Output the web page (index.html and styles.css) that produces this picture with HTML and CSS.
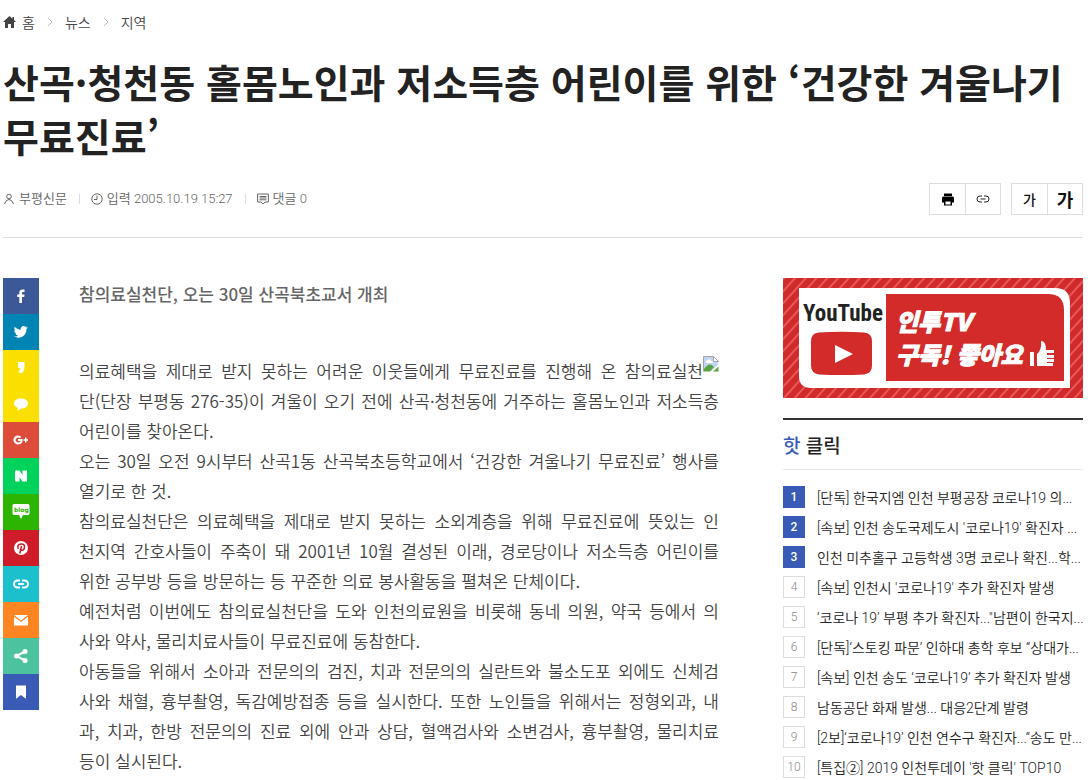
FILE: index.html
```html
<!DOCTYPE html>
<html lang="ko">
<head>
    <meta charset="UTF-8">
    <meta name="viewport" content="width=device-width, initial-scale=1">
    <title>인천투데이</title>
    <link rel="stylesheet" href="styles.css">
</head>
<body>

    <header class="article-head">
        <nav class="breadcrumb">
            <a href="#"><svg width="13" height="12" viewBox="0 0 13 12"><path d="M6.500 0L0 6h2v6h3V8h3v4h3V6h2L11 4V1H9.500v1.700z"/></svg>홈</a>
            <svg class="arrow" width="6" height="8" viewBox="0 0 6 8"><path d="M1 0l4 4-4 4"/></svg>
            <a href="#">뉴스</a>
            <svg class="arrow" width="6" height="8" viewBox="0 0 6 8"><path d="M1 0l4 4-4 4"/></svg>
            <a href="#">지역</a>
        </nav>
        <h1>산곡·청천동 홀몸노인과 저소득층 어린이를 위한 ‘건강한 겨울나기 무료진료’</h1>
        <div class="info">
            <ul class="meta">
                <li><svg width="12" height="12" viewBox="0 0 12 12"><circle cx="6" cy="3.500" r="2.300"/><path d="M1.500 11l2-3.500Q6 5.500 8.500 7.500l2 3.500"/></svg>부평신문</li>
                <li><svg width="12" height="12" viewBox="0 0 12 12"><circle cx="6" cy="6" r="5.200"/><path d="M6 2.500V6.500H3"/></svg>입력 2005.10.19 15:27</li>
                <li><svg width="12" height="12" viewBox="0 0 12 12"><path d="M.6 1h10.800v8H8L6 11 4 9H.6zM2.500 3.500h7M2.500 5h7M2.500 6.800h7"/></svg>댓글 0</li>
            </ul>
            <div class="tools">
                <div class="tool-group">
                    <button type="button" aria-label="프린트"><svg width="14" height="14" viewBox="0 0 14 14"><path d="M3 1.500h8V4H3z"/><path d="M2.500 4.500h9q1.500 0 1.500 1.500v4.500h-2V9H3v1.500H1V6q0-1.500 1.500-1.500z"/><path d="M3 8.500h8v5H3zM4.500 9.500v3h5v-3z" fill-rule="evenodd"/></svg></button>
                    <button type="button" aria-label="기사링크"><svg class="line" width="14" height="14" viewBox="0 0 14 14"><path d="M6 4H4a3 3 0 0 0 0 6h2M8 4h2a3 3 0 0 1 0 6H8M4.500 7h5"/></svg></button>
                </div>
                <div class="tool-group">
                    <button type="button" class="small">가</button>
                    <button type="button" class="big">가</button>
                </div>
            </div>
        </div>
    </header>

    <div class="wrap">
        <div class="share">
            <a href="#" class="facebook" aria-label="페이스북"><svg viewBox="0 0 16 16"><path d="M6.300 15V9H4.200V6.400h2.100V4.500Q6.300 1.500 9.500 1.500h2v2.400H10Q9 3.900 9 4.900v1.500h2.500L11.200 9H9v6z"/></svg></a>
            <a href="#" class="twitter" aria-label="트위터"><svg viewBox="0 0 16 16"><path d="M15 3.500l-1.500 1.600C13.600 10 10 13.800 5.300 13.800c-1.700 0-3.200-.4-4.300-1.200 1.600.1 3-.3 4.100-1.200-1.300 0-2.300-.8-2.700-2h1.200C2.200 9 1.200 7.900 1.200 6.400l1.300.3C1.300 5.700 1 4.100 1.700 2.800 3.200 4.600 5.300 5.600 7.700 5.700 7.300 3.800 8.600 2 10.500 2c.9 0 1.600.3 2.100.9l1.800-.6-1.200 1.500z"/></svg></a>
            <a href="#" class="story" aria-label="카카오스토리"><svg viewBox="0 0 16 16"><path d="M5 2h6.500v5q0 5-4 6.500L5.500 11.500Q7.500 10.500 7.500 8H5z"/></svg></a>
            <a href="#" class="talk" aria-label="카카오톡"><svg viewBox="0 0 16 16"><path d="M8 2.500c4 0 7 2 7 5s-3 5-7 5L4.500 15l.3-3.200C2.500 11 1 9.500 1 7.500c0-3 3-5 7-5z"/></svg></a>
            <a href="#" class="google" aria-label="구글플러스"><svg viewBox="0 0 16 16"><path d="M8.300 5L6.900 6.300a2.400 2.400 0 1 0 .5 2.700H5V7h4.700q.3 5.500-4.600 5.500A4.500 4.500 0 1 1 8.300 5zM12 5.500h1.500v1.700H15v1.500h-1.500v1.700H12V8.700h-1.500V7.200H12z"/></svg></a>
            <a href="#" class="naver" aria-label="네이버"><svg viewBox="0 0 16 16"><path d="M2 2.500h4.500l3 4.500V2.500H14v11H9.500l-3-4.500v4.500H2z"/></svg></a>
            <a href="#" class="blog" aria-label="네이버 블로그"><svg viewBox="0 0 18 16"><path d="M2 0h14q1.500 0 1.500 1.500v8Q17.500 11 16 11h-5l-2 4-2-4H2Q.5 11 .5 9.500v-8Q.5 0 2 0z"/><text x="2" y="8">blog</text></svg></a>
            <a href="#" class="pinterest" aria-label="핀터레스트"><svg viewBox="0 0 16 16"><circle cx="8" cy="8" r="7"/><path class="cut" d="M5.300 9Q3.500 4 8.300 4q3.700 0 3.200 3.500-.8 3.500-3.200 2.500-1-.5-1-1M8.500 6l-1.700 7.500"/></svg></a>
            <a href="#" class="link" aria-label="링크"><svg viewBox="0 0 16 16"><path class="stroke" d="M7 4.500H4.500a3.500 3.500 0 0 0 0 7H7M9 4.500h2.500a3.500 3.500 0 0 1 0 7H9M5 8h6"/></svg></a>
            <a href="#" class="mail" aria-label="이메일"><svg viewBox="0 0 16 16"><path d="M1 3h14L8 8.500zM1 4.700l7 5.300 7-5.300V13.500H1z"/></svg></a>
            <a href="#" class="more" aria-label="공유"><svg viewBox="0 0 16 16"><circle cx="3.500" cy="8" r="2.500"/><circle cx="12" cy="3.500" r="2.500"/><circle cx="12" cy="12.500" r="2.500"/><path class="stroke" d="M12 3.500L3.500 8l8.500 4.500"/></svg></a>
            <a href="#" class="bookmark" aria-label="북마크"><svg viewBox="0 0 16 16"><path d="M3 1.500h10v13.200L8 11l-5 3.700z"/></svg></a>
        </div>

        <article class="article">
            <h2>참의료실천단, 오는 30일 산곡북초교서 개최</h2>
            <div class="text">
                <svg class="photo" width="16" height="16" viewBox="0 0 16 16">
                    <path fill="#fff" stroke="#a5a5a5" d="M.5 15.500V.5h10l5 5"/>
                    <path fill="#c2d5f5" d="M1 1h9v5h5v3L8 15H1z"/>
                    <path fill="#fff" d="M3 6q0-2 2-2 2-2 3 1 2 0 2 2H3z"/>
                    <path fill="#58a542" d="M1 13q4-6 8-4l2 2-4 4.500H1zM10 15.500l5.500-5v5z"/>
                    <path fill="#fff" stroke="#a5a5a5" d="M10.500.5v5h5z"/>
                </svg>
                <p>의료혜택을 제대로 받지 못하는 어려운 이웃들에게 무료진료를 진행해 온 참의료실천<br>단(단장 부평동 276-35)이 겨울이 오기 전에 산곡·청천동에 거주하는 홀몸노인과 저소득층 <span>어린이를 찾아온다.</span></p>
                <p>오는 30일 오전 9시부터 산곡1동 산곡북초등학교에서 ‘건강한 겨울나기 무료진료’ 행사를 <span>열기로 한 것.</span></p>
                <p>참의료실천단은 의료혜택을 제대로 받지 못하는 소외계층을 위해 무료진료에 뜻있는 인<br>천지역 간호사들이 주축이 돼 2001년 10월 결성된 이래, 경로당이나 저소득층 어린이를 <span>위한 공부방 등을 방문하는 등 꾸준한 의료 봉사활동을 펼쳐온 단체이다.</span></p>
                <p>예전처럼 이번에도 참의료실천단을 도와 인천의료원을 비롯해 동네 의원, 약국 등에서 의<span>사와 약사, 물리치료사들이 무료진료에 동참한다.</span></p>
                <p>아동들을 위해서 소아과 전문의의 검진, 치과 전문의의 실란트와 불소도포 외에도 신체검<br>사와 채혈, 흉부촬영, 독감예방접종 등을 실시한다. 또한 노인들을 위해서는 정형외과, 내<br>과, 치과, 한방 전문의의 진료 외에 안과 상담, 혈액검사와 소변검사, 흉부촬영, 물리치료 <span>등이 실시된다.</span></p>
            </div>
        </article>

        <aside class="side">
            <a href="#" class="banner">
                <svg viewBox="0 0 300 120">
                    <defs>
                        <pattern id="stripes" width="8" height="8" patternUnits="userSpaceOnUse" patternTransform="rotate(42)">
                            <rect width="8" height="8" fill="#d12a2b"/>
                            <rect width="2" height="8" fill="#e8585a"/>
                        </pattern>
                    </defs>
                    <rect width="300" height="120" fill="url(#stripes)"/>
                    <path fill="#fff" d="M16 10h256q15 0 15 15v85H28q-12 0-12-12z"/>
                    <path fill="#d32a2a" d="M103 16h162q16 0 16 16v71H103z"/>
                    <text class="tube" x="20" y="43">YouTube</text>
                    <path fill="#d32a2a" d="M36 54.500q23-1.500 45 0 8 .5 8 9v24q0 8-8 9-22 1-45 0-8-1-8-9v-24q0-8.500 8-9z"/>
                    <path fill="#fff" d="M52 67l18 9-18 9z"/>
                    <text class="tv" x="113" y="53">인투TV</text>
                    <text class="tv" x="113" y="86">구독! 좋아요</text>
                    <path fill="#fff" d="M247 74h4v14h-4zM254 88V76q5-4 4-13 5 0 5 9h8v3h-7v2h7v3h-7v1h7v3h-7v1h6v3z"/>
                </svg>
            </a>
            <section class="hot">
                <h2><span>핫</span> 클릭</h2>
                <ol>
                    <li class="top"><b>1</b><a href="#">[단독] 한국지엠 인천 부평공장 코로나19 의...</a></li>
                    <li class="top"><b>2</b><a href="#">[속보] 인천 송도국제도시 '코로나19' 확진자 ...</a></li>
                    <li class="top"><b>3</b><a href="#">인천 미추홀구 고등학생 3명 코로나 확진...학...</a></li>
                    <li><b>4</b><a href="#">[속보] 인천시 '코로나19' 추가 확진자 발생</a></li>
                    <li><b>5</b><a href="#">‘코로나 19’ 부평 추가 확진자..."남편이 한국지...</a></li>
                    <li><b>6</b><a href="#">[단독]‘스토킹 파문’ 인하대 총학 후보 “상대가...</a></li>
                    <li><b>7</b><a href="#">[속보] 인천 송도 ‘코로나19’ 추가 확진자 발생</a></li>
                    <li><b>8</b><a href="#">남동공단 화재 발생... 대응2단계 발령</a></li>
                    <li><b>9</b><a href="#">[2보]‘코로나19’ 인천 연수구 확진자...“송도 만...</a></li>
                    <li><b>10</b><a href="#">[특집②] 2019 인천투데이 '핫 클릭' TOP10</a></li>
                </ol>
            </section>
        </aside>
    </div>

</body>
</html>
```
FILE: styles.css
```css
* {
    box-sizing: border-box;
}

body {
    margin: 0;
    padding: 0 5px 0 3px;
    background: #fff;
    color: #222;
    font-family: "Noto Sans CJK KR", "Noto Sans", sans-serif;
    font-weight: 350;
}

h1, h2, p, ul, ol {
    margin: 0;
    padding: 0;
    list-style: none;
}

a {
    color: inherit;
    text-decoration: none;
}

/* head */
.article-head {
    padding-top: 12px;
    border-bottom: 1px solid #ddd;
}

.breadcrumb {
    display: flex;
    align-items: center;
    gap: 12px;
    font-size: 14px;
    line-height: 20px;
    color: #444;
}

.breadcrumb a {
    display: flex;
    align-items: center;
    gap: 6px;
}

.breadcrumb svg {
    fill: #444;
}

.breadcrumb .arrow {
    fill: none;
    stroke: #bbb;
}

h1 {
    margin-top: 22px;
    font-size: 39px;
    font-weight: 700;
    line-height: 54px;
}

.info {
    display: flex;
    justify-content: space-between;
    align-items: center;
    padding: 21px 0 22px;
}

.meta {
    display: flex;
    font-family: Roboto, "Noto Sans CJK KR", sans-serif;
    font-size: 13px;
    line-height: 20px;
    color: #666;
}

.meta li {
    display: flex;
    align-items: center;
    gap: 4px;
}

.meta li + li::before {
    content: "";
    width: 1px;
    height: 10px;
    margin: 0 7px 0 12px;
    background: #ddd;
}

.meta svg {
    fill: none;
    stroke: #666;
}

.tools {
    display: flex;
    gap: 10px;
}

.tool-group {
    display: flex;
    border: 1px solid #ddd;
}

.tool-group button {
    display: flex;
    align-items: center;
    justify-content: center;
    width: 35px;
    height: 30px;
    padding: 0;
    border: 0;
    background: #fff;
    color: #111;
    font-family: inherit;
    font-weight: 500;
}

.tool-group button + button {
    border-left: 1px solid #ddd;
}

.tool-group .line {
    fill: none;
    stroke: #222;
}

.tool-group .small {
    font-size: 14px;
}

.tool-group .big {
    font-size: 18px;
    font-weight: 700;
}

/* body */
.wrap {
    display: grid;
    grid-template-columns: 36px minmax(0, 1fr) 300px;
    padding-top: 40px;
}

.share a {
    display: flex;
    align-items: center;
    justify-content: center;
    height: 36px;
}

.share svg {
    width: 16px;
    height: 16px;
    fill: #fff;
}

.share .stroke {
    fill: none;
    stroke: #fff;
    stroke-width: 2;
}

.share .cut {
    fill: none;
    stroke: #ce1c28;
    stroke-width: 1.5;
}

.share .blog svg {
    width: 18px;
}

.share text {
    font: bold 6px "DejaVu Sans", sans-serif;
    fill: #2db400;
}

.facebook { background: #3b5998; }
.twitter { background: #0084b4; }
.story, .talk { background: #fadf00; }
.google { background: #dd4b39; }
.naver { background: #00d25c; }
.blog { background: #2db400; }
.pinterest { background: #ce1c28; }
.link { background: #1cbfcc; }
.mail { background: #ff8522; }
.more { background: #4cc29e; }
.bookmark { background: #395bb5; }

.article {
    margin: 0 64px 0 40px;
    font-size: 17px;
    line-height: 30px;
    color: #444;
}

.article h2 {
    margin-bottom: 46px;
    font-size: 17px;
    font-weight: 500;
    line-height: 32px;
    color: #666;
}

.article p {
    text-align: justify;
    text-align-last: justify;
}

.article p span {
    display: block;
    text-align-last: left;
}

.photo {
    float: right;
}

/* side */
.banner svg {
    display: block;
    width: 100%;
}

.banner .tube {
    font: bold 23px "Liberation Sans Narrow", "Roboto Condensed", "Open Sans Condensed", sans-serif;
    fill: #222;
}

.banner .tv {
    font-size: 24px;
    font-weight: 900;
    font-style: italic;
    fill: #fff;
    stroke: #fff;
}

.hot {
    margin-top: 20px;
    border-top: 2px solid #333;
}

.hot h2 {
    padding: 11px 0 10px;
    border-bottom: 1px solid #e8e8e8;
    font-size: 19px;
    font-weight: 500;
    line-height: 28px;
}

.hot h2 span {
    color: #395bb5;
}

.hot ol {
    padding-top: 12px;
    font-family: Roboto, "Noto Sans CJK KR", sans-serif;
}

.hot li {
    display: flex;
    align-items: center;
    gap: 12px;
    height: 30px;
    font-size: 14px;
    white-space: nowrap;
}

.hot b {
    flex: none;
    width: 22px;
    border: 1px solid #ddd;
    color: #888;
    font-size: 12px;
    font-weight: 300;
    line-height: 20px;
    text-align: center;
}

.hot .top b {
    border-color: #395bb5;
    background: #395bb5;
    color: #fff;
    font-weight: 500;
}
```
